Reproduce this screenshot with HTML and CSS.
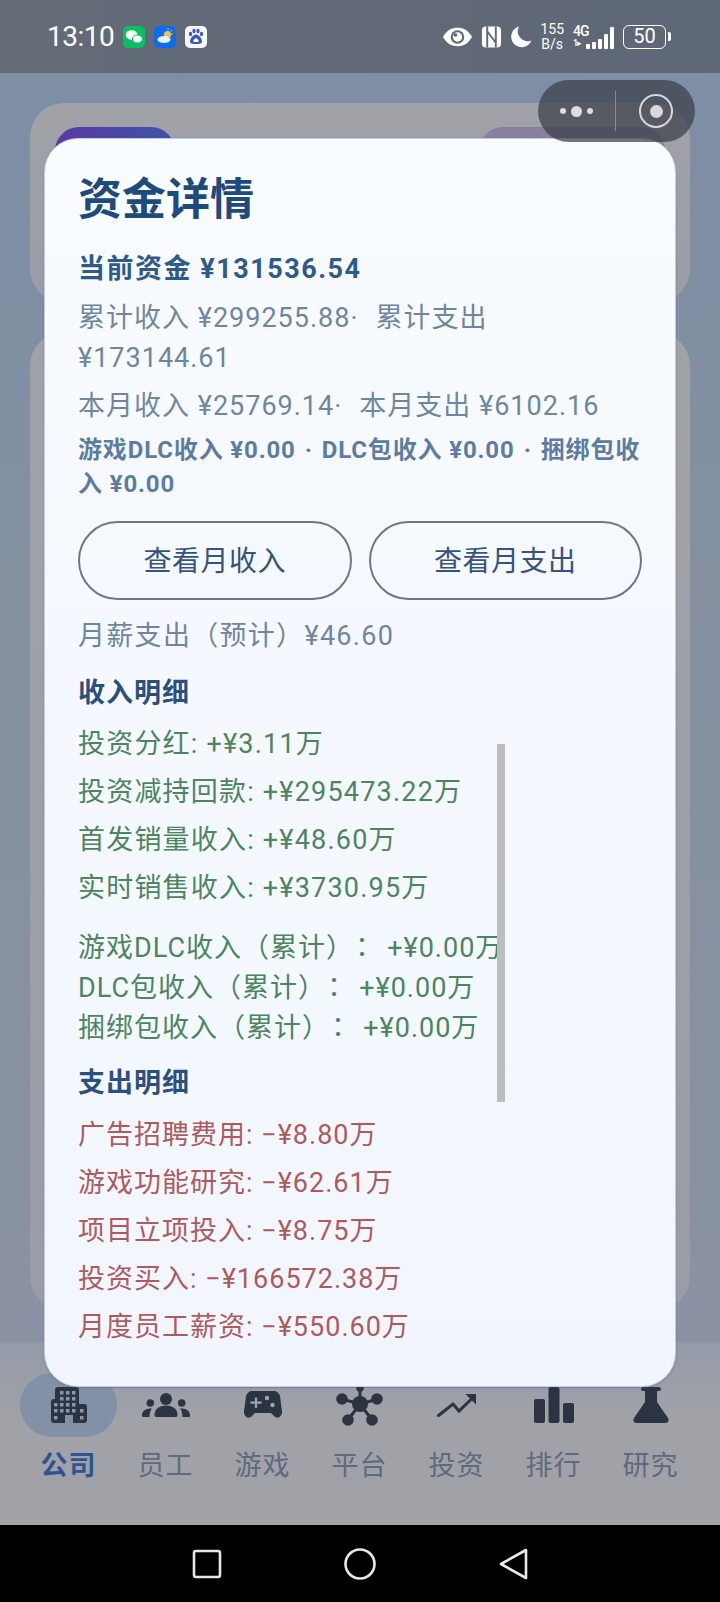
FILE: index.html
```html
<!DOCTYPE html>
<html>
<head>
  <meta charset="utf-8">
  <link rel="stylesheet" href="styles.css">
</head>
<body>
  <div class="screen">
    <div class="status-bar">
      <div class="status-left">
        <span class="clock">13:10</span>
        <svg class="app-icon" viewBox="0 0 22 22"><rect width="22" height="22" rx="5" fill="#07c160"/><ellipse cx="8.6" cy="9" rx="5.8" ry="4.8" fill="#fff"/><ellipse cx="14.400" cy="13" rx="5" ry="4" fill="#fff" stroke="#07c160"/></svg>
        <svg class="app-icon" viewBox="0 0 22 22"><rect width="22" height="22" rx="5" fill="#0a6cf0"/><path d="M14 2v2M19 8h-2M18 4l-1.500 1.500" stroke="#f5c04a" stroke-width="1"/><circle cx="13.500" cy="8.500" r="3.600" fill="#f5c04a"/><ellipse cx="10" cy="13.500" rx="6.500" ry="3.600" fill="#e6f0fb"/></svg>
        <svg class="app-icon" viewBox="0 0 22 22"><rect width="22" height="22" rx="5" fill="#f6f8fd"/><ellipse cx="5.500" cy="8" rx="1.600" ry="2.200" fill="#3d55c8"/><ellipse cx="9" cy="5" rx="1.600" ry="2.200" fill="#3d55c8"/><ellipse cx="13" cy="5" rx="1.600" ry="2.200" fill="#3d55c8"/><ellipse cx="16.500" cy="8" rx="1.600" ry="2.200" fill="#3d55c8"/><path d="M11 8.500c-3 0-6 4-6 7 0 2 2 2.500 6 2.500s6-.5 6-2.500c0-3-3-7-6-7z" fill="#3d55c8"/><path d="M8.500 16v-2l2.500-2 2.500 2v2z" fill="#fff"/></svg>
      </div>
      <div class="status-right">
        <svg class="ic-eye" viewBox="0 0 32 22"><path d="M1 11C5 4 10 1.500 16 1.500S27 4 31 11c-4 7-9 9.500-15 9.500S5 18 1 11z" fill="#fff"/><circle cx="16" cy="11" r="7" fill="#5f6876"/><circle cx="16" cy="11" r="4.800" fill="#fff"/><circle cx="14" cy="9" r="1.800" fill="#5f6876"/></svg>
        <svg class="ic-nfc" viewBox="0 0 22 22"><rect x="1" y="0" width="20" height="22" rx="4" fill="#fff"/><path d="M6.500 0v22M15.500 0v22M6.500 5l9 12" stroke="#5f6876" stroke-width="2" fill="none"/></svg>
        <svg class="ic-moon" viewBox="0 0 22 22"><path d="M9 0.500A10.500 10.500 0 1 0 21.500 14.500 10 10 0 0 1 9 0.500z" fill="#fff"/></svg>
        <div class="net-speed"><span>155</span><span>B/s</span></div>
        <div class="signal">
          <div class="signal-type"><span>4G</span><span class="signal-sim">1▸</span></div>
          <div class="bars"><i class="b1"></i><i class="b2"></i><i class="b3"></i><i class="b4"></i><i class="b5"></i></div>
        </div>
        <div class="battery"><div class="battery-box">50</div><div class="battery-cap"></div></div>
      </div>
    </div>

    <div class="app-body">
      <div class="bg-card bg-card-top">
        <div class="bg-card-tags"><div class="tag tag-a"></div><div class="tag tag-b"></div></div>
      </div>
      <div class="bg-card bg-card-main"></div>
    </div>

    <div class="tabbar">
      <div class="tab active">
        <div class="tab-icon">
          <svg width="36" height="36" viewBox="0 0 36 36"><path d="M7 0H25a3 3 0 0 1 3 3V17H33a3 3 0 0 1 3 3V33a3 3 0 0 1-3 3H22V28H14V36H3a3 3 0 0 1-3-3V15a3 3 0 0 1 3-3H4V3a3 3 0 0 1 3-3z" fill="#2c3342"/><g fill="#8a97ab"><rect x="9" y="4" width="3.500" height="3.500"/><rect x="15" y="4" width="3.500" height="3.500"/><rect x="21" y="4" width="3.500" height="3.500"/><rect x="9" y="10" width="3.500" height="3.500"/><rect x="15" y="10" width="3.500" height="3.500"/><rect x="21" y="10" width="3.500" height="3.500"/><rect x="3" y="16" width="3.500" height="3.500"/><rect x="9" y="16" width="3.500" height="3.500"/><rect x="15" y="16" width="3.500" height="3.500"/><rect x="21" y="16" width="3.500" height="3.500"/><rect x="3" y="22" width="3.500" height="3.500"/><rect x="9" y="22" width="3.500" height="3.500"/><rect x="15" y="22" width="3.500" height="3.500"/><rect x="21" y="22" width="3.500" height="3.500"/><rect x="29" y="22" width="3.500" height="3.500"/><rect x="3" y="29" width="3.500" height="3.500"/><rect x="29" y="29" width="3.500" height="3.500"/></g></svg>
        </div>
        <span>公司</span>
      </div>
      <div class="tab">
        <div class="tab-icon">
          <svg width="48" height="24" viewBox="0 0 48 24"><circle cx="24" cy="6" r="6" fill="#2c3342"/><circle cx="8.300" cy="10" r="3.800" fill="#2c3342"/><circle cx="39.700" cy="10" r="3.800" fill="#2c3342"/><path d="M12.500 22c0-6 5-9.500 11.500-9.500S35.500 16 35.500 22c0 1.500-1 2-2 2h-19c-1 0-2-.5-2-2z" fill="#2c3342"/><path d="M0 22.500c0-4 3-7 8-7h2c-1.500 2-2.500 4.500-2.500 8.500H1.500c-1 0-1.500-.5-1.500-1.500zM48 22.500c0-4-3-7-8-7h-2c1.500 2 2.500 4.500 2.500 8.500h6c1 0 1.500-.5 1.500-1.500z" fill="#2c3342"/></svg>
        </div>
        <span>员工</span>
      </div>
      <div class="tab">
        <div class="tab-icon">
          <svg width="38" height="28" viewBox="0 0 38 28"><path d="M8 0h22c3 0 5 2 6 5l2 15c.6 5-4 9-8 5l-3-3H11l-3 3c-4 4-8.600 0-8-5l2-15c1-3 3-5 6-5z" fill="#2c3342"/><path d="M12 6.500v10.500M6.500 11.700h11" stroke="#a0a6b0" stroke-width="2.200"/><circle cx="23" cy="7" r="2.200" fill="#a0a6b0"/><circle cx="28.500" cy="14" r="2.200" fill="#a0a6b0"/></svg>
        </div>
        <span>游戏</span>
      </div>
      <div class="tab">
        <div class="tab-icon">
          <svg width="47" height="42" viewBox="0 0 47 42"><g stroke="#2c3342" stroke-width="3"><path d="M24 20 6 15M24 20 42 15M24 20 12 36M24 20 36 36M24 20V4"/></g><circle cx="24" cy="20" r="8" fill="#2c3342"/><circle cx="6" cy="15" r="5.800" fill="#2c3342"/><circle cx="41" cy="15" r="5.800" fill="#2c3342"/><circle cx="12" cy="36" r="5.800" fill="#2c3342"/><circle cx="36" cy="36" r="5.800" fill="#2c3342"/><circle cx="24" cy="4" r="3.800" fill="#2c3342"/></svg>
        </div>
        <span>平台</span>
      </div>
      <div class="tab">
        <div class="tab-icon">
          <svg width="39" height="23" viewBox="0 0 39 23"><path d="M1.500 21.500 16 10l6 7L36 3.500" stroke="#2c3342" stroke-width="3" fill="none" stroke-linecap="round"/><path d="M28.500 0H39V10.500z" fill="#2c3342"/></svg>
        </div>
        <span>投资</span>
      </div>
      <div class="tab">
        <div class="tab-icon">
          <svg width="40" height="36" viewBox="0 0 40 36"><rect x="0" y="12" width="11" height="24" rx="2" fill="#2c3342"/><rect x="14.500" y="0" width="11" height="36" rx="2" fill="#2c3342"/><rect x="29" y="16" width="11" height="20" rx="2" fill="#2c3342"/></svg>
        </div>
        <span>排行</span>
      </div>
      <div class="tab">
        <div class="tab-icon">
          <svg width="36" height="36" viewBox="0 0 36 36"><path d="M10 0h16a2 2 0 0 1 0 4h-2v11l11 16c1.500 2.500 0 5-3 5H4c-3 0-4.500-2.500-3-5l11-16V4h-2a2 2 0 0 1 0-4z" fill="#2c3342"/></svg>
        </div>
        <span>研究</span>
      </div>
    </div>

    <div class="navbar">
      <svg viewBox="0 0 32 32"><rect x="3" y="3" width="26" height="26" rx="2" fill="none" stroke="#e8e8e8" stroke-width="2.600"/></svg>
      <svg viewBox="0 0 32 32"><circle cx="16" cy="16" r="14.500" fill="none" stroke="#e8e8e8" stroke-width="2.600"/></svg>
      <svg viewBox="0 0 32 32"><path d="M29 2 4 16l25 14z" fill="none" stroke="#e8e8e8" stroke-width="2.600" stroke-linejoin="round"/></svg>
    </div>

    <div class="capsule">
      <div class="capsule-dots"><i></i><i class="big"></i><i></i></div>
      <div class="capsule-line"></div>
      <div class="capsule-target"><i></i></div>
    </div>

    <div class="dialog">
      <h2>资金详情</h2>
      <div class="fund-current">当前资金 ¥131536.54</div>
      <div class="fund-line">累计收入 ¥299255.88<span class="sep">·</span>累计支出<br>¥173144.61</div>
      <div class="fund-line">本月收入 ¥25769.14<span class="sep">·</span>本月支出 ¥6102.16</div>
      <div class="fund-dlc">游戏DLC收入 ¥0.00<span class="sep-dlc">·</span>DLC包收入 ¥0.00<span class="sep-dlc">·</span>捆绑包收<br>入 ¥0.00</div>
      <div class="button-group">
        <button>查看月收入</button>
        <button>查看月支出</button>
      </div>
      <div class="fund-line fund-salary">月薪支出（预计）¥46.60</div>

      <div class="detail">
        <div class="scrollbar"></div>
        <h3>收入明细</h3>
        <div class="row income">投资分红: +¥3.11万</div>
        <div class="row income">投资减持回款: +¥295473.22万</div>
        <div class="row income">首发销量收入: +¥48.60万</div>
        <div class="row income">实时销售收入: +¥3730.95万</div>
        <div class="dlc-rows">
          <div class="dlc-row income">游戏DLC收入（累计）<span class="colon">：</span> +¥0.00万</div>
          <div class="dlc-row income">DLC包收入（累计）<span class="colon">：</span> +¥0.00万</div>
          <div class="dlc-row income">捆绑包收入（累计）<span class="colon">：</span> +¥0.00万</div>
        </div>
        <h3 class="h3-expense">支出明细</h3>
        <div class="row expense">广告招聘费用: −¥8.80万</div>
        <div class="row expense">游戏功能研究: −¥62.61万</div>
        <div class="row expense">项目立项投入: −¥8.75万</div>
        <div class="row expense">投资买入: −¥166572.38万</div>
        <div class="row expense">月度员工薪资: −¥550.60万</div>
      </div>
    </div>
  </div>
</body>
</html>
```

FILE: styles.css
```css
* {
  box-sizing: border-box;
}

html, body {
  margin: 0;
  padding: 0;
}

body {
  width: 720px;
  height: 1602px;
  overflow: hidden;
  font-family: Roboto, "Noto Sans CJK SC", sans-serif;
}

.screen {
  position: relative;
  display: flex;
  flex-direction: column;
  width: 720px;
  height: 1602px;
  overflow: hidden;
  background: #7d8ca4;
}

/* status bar */
.status-bar {
  display: flex;
  justify-content: space-between;
  align-items: center;
  height: 73px;
  padding: 0 49px 0 47px;
  background: linear-gradient(90deg, #646b77 0%, #5e6776 100%);
  color: #fff;
}

.status-left {
  display: flex;
  align-items: center;
  gap: 9px;
}

.clock {
  font-size: 28px;
  letter-spacing: -0.5px;
}

.app-icon {
  width: 22px;
  height: 22px;
}

.status-right {
  display: flex;
  align-items: center;
  gap: 8px;
}

.ic-eye {
  width: 31px;
  height: 22px;
}

.ic-nfc {
  width: 21px;
  height: 22px;
}

.ic-moon {
  width: 22px;
  height: 22px;
}

.net-speed {
  display: flex;
  flex-direction: column;
  align-items: center;
  font-size: 14px;
  line-height: 15px;
}

.signal {
  display: flex;
  align-items: flex-end;
  height: 24px;
  margin-left: 1px;
}

.signal-type {
  display: flex;
  flex-direction: column;
  align-items: flex-start;
  width: 17px;
  margin-right: -4px;
  font-size: 14px;
  font-weight: 500;
  line-height: 13px;
  letter-spacing: -1px;
}

.signal-sim {
  font-size: 9px;
  line-height: 11px;
}

.bars {
  display: flex;
  align-items: flex-end;
  gap: 2.5px;
  height: 22px;
}

.bars i {
  display: block;
  width: 3.6px;
  background: #fff;
  border-radius: 1px;
}

.bars .b1 { height: 5px; }
.bars .b2 { height: 7px; }
.bars .b3 { height: 10px; }
.bars .b4 { height: 15px; }
.bars .b5 { height: 22px; }

.battery {
  display: flex;
  align-items: center;
  gap: 2px;
  margin-left: 1px;
}

.battery-box {
  width: 43px;
  height: 24px;
  border: 1.5px solid #fff;
  border-radius: 6px;
  font-size: 20px;
  line-height: 21px;
  text-align: center;
}

.battery-cap {
  width: 3px;
  height: 9px;
  background: #fff;
  border-radius: 0 2px 2px 0;
}

/* page behind the dialog */
.app-body {
  flex: 1;
  display: flex;
  flex-direction: column;
  gap: 29px;
  padding: 30px 30px 0;
  background: linear-gradient(180deg, #7e8ea5 0%, #84909f 45%, #8a92a3 100%);
}

.bg-card {
  width: 660px;
  background: linear-gradient(180deg, #a0a2a7 0%, #9a9da6 100%);
  border-radius: 34px;
}

.bg-card-top {
  height: 200px;
  padding: 24px 25px 0;
}

.bg-card-tags {
  display: flex;
  justify-content: space-between;
}

.tag {
  width: 120px;
  height: 40px;
  border-radius: 24px 24px 0 0;
}

.tag-a {
  background: linear-gradient(90deg, #5b3aa6, #3d55a5);
}

.tag-b {
  width: 186px;
  background: #897f9e;
}

.bg-card-main {
  height: 978px;
}

/* bottom tabs */
.tabbar {
  display: flex;
  height: 183px;
  padding: 31px 0 0 20px;
  background: linear-gradient(180deg, #959aa8 0%, #a0a2a8 40%, #a1a2a6 100%);
}

.tab {
  display: flex;
  flex-direction: column;
  align-items: center;
  width: 97px;
  font-size: 27px;
  letter-spacing: 1px;
  color: #5e6a7e;
}

.tab span {
  margin-top: 11px;
  line-height: 36px;
}

.tab.active span {
  font-weight: 700;
  color: #2f5590;
}

.tab-icon {
  display: flex;
  align-items: center;
  justify-content: center;
  width: 97px;
  height: 64px;
  border-radius: 32px;
}

.tab.active .tab-icon {
  background: #8391a7;
}

/* android nav */
.navbar {
  display: flex;
  align-items: center;
  justify-content: center;
  gap: 121px;
  height: 77px;
  background: #000;
}

.navbar svg {
  width: 32px;
  height: 32px;
}

/* mini program capsule */
.capsule {
  position: absolute;
  top: 80px;
  left: 538px;
  display: flex;
  align-items: center;
  width: 157px;
  height: 62px;
  border-radius: 31px;
  background: rgba(58, 62, 72, 0.72);
  z-index: 3;
}

.capsule-dots {
  display: flex;
  align-items: center;
  justify-content: center;
  gap: 5px;
  width: 77px;
}

.capsule-dots i {
  display: block;
  width: 6px;
  height: 6px;
  border-radius: 50%;
  background: #ddd;
}

.capsule-dots .big {
  width: 11px;
  height: 11px;
}

.capsule-line {
  width: 1px;
  height: 40px;
  background: #8a8c90;
}

.capsule-target {
  display: flex;
  align-items: center;
  justify-content: center;
  width: 34px;
  height: 34px;
  margin-left: 23px;
  border: 2.5px solid #d8d8d8;
  border-radius: 50%;
}

.capsule-target i {
  display: block;
  width: 13px;
  height: 13px;
  border-radius: 50%;
  background: #d8d8d8;
}

/* dialog */
.dialog {
  position: absolute;
  top: 138px;
  left: 44px;
  width: 632px;
  height: 1249px;
  padding: 32px 33px 0;
  background: linear-gradient(180deg, #f8fbff 0%, #f1f6fe 100%);
  border: 1px solid #c3cce0;
  border-radius: 34px;
  box-shadow: 0 1px 2px rgba(70, 80, 110, 0.4);
  overflow: hidden;
  z-index: 2;
}

h2 {
  margin: -1px 0 0;
  font-size: 44px;
  line-height: 60px;
  font-weight: 700;
  color: #1f4b7c;
}

.fund-current {
  margin-top: 19px;
  font-size: 27px;
  line-height: 41px;
  font-weight: 700;
  letter-spacing: 1.5px;
  color: #2f5a8c;
}

.fund-line {
  margin-top: 8px;
  font-size: 27px;
  line-height: 40px;
  letter-spacing: 1px;
  color: #6f86a3;
}

.sep {
  margin-right: 17px;
}

.fund-dlc {
  margin-top: 7px;
  font-size: 24px;
  line-height: 34px;
  font-weight: 700;
  letter-spacing: 0.85px;
  white-space: nowrap;
  color: #5d7ca3;
}

.sep-dlc {
  margin: 0 9px;
}

.button-group {
  display: flex;
  gap: 17px;
  margin-top: 20px;
}

.button-group button {
  flex: 1;
  height: 79px;
  padding: 0 0 3px;
  border: 2px solid #71777f;
  border-radius: 40px;
  background: transparent;
  font-family: inherit;
  font-size: 28px;
  letter-spacing: 0.5px;
  color: #35537f;
}

.fund-salary {
  margin-top: 16px;
  letter-spacing: 1.3px;
}

.detail {
  position: relative;
  margin-top: 17px;
}

.scrollbar {
  position: absolute;
  top: 71px;
  left: 419px;
  width: 8px;
  height: 358px;
  background: #bcbdbf;
}

h3 {
  margin: 0 0 10.5px;
  font-size: 27px;
  line-height: 40px;
  font-weight: 700;
  letter-spacing: 1px;
  color: #2b4f80;
}

.h3-expense {
  margin: 15px 0 12.5px;
}

.row {
  margin-top: 8px;
  font-size: 27px;
  line-height: 40px;
  letter-spacing: 1px;
}

.row.income {
  letter-spacing: 1.2px;
}

.income {
  color: #4c8560;
}

.expense {
  color: #b05a5f;
}

.dlc-rows {
  margin-top: 20px;
}

.dlc-row {
  font-size: 27px;
  line-height: 40px;
  letter-spacing: 1px;
  white-space: nowrap;
}

.colon {
  margin: 0 3px 0 8px;
  font-family: "Noto Sans CJK TC", sans-serif;
  line-height: 0;
}
```
